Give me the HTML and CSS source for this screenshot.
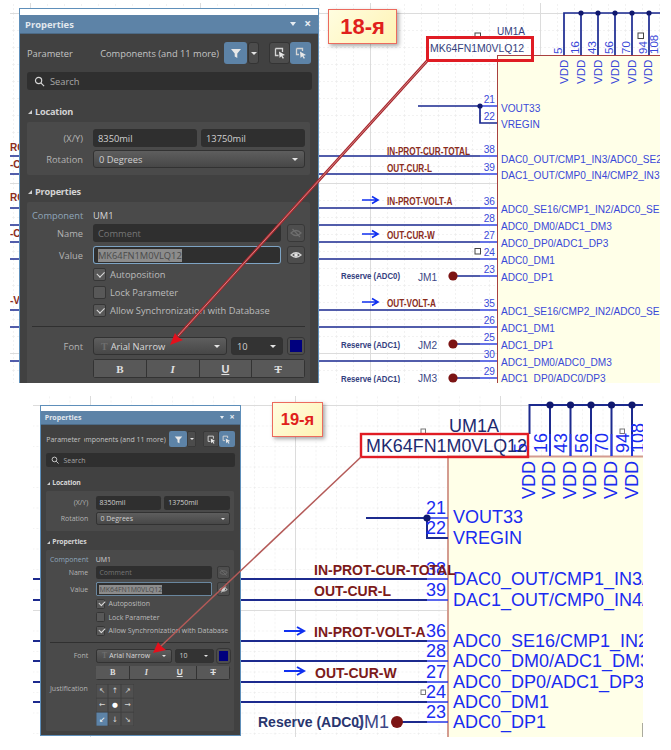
FILE: index.html
```html
<!DOCTYPE html>
<html lang="ru">
<head>
<meta charset="utf-8">
<title>Properties</title>
<link rel="stylesheet" href="styles.css">
</head>
<body>
<main class="page">

  <!-- Sheet 18 -->
  <section class="scene scene-a">
    <svg class="sheet" viewBox="10 3 650 380" width="650" height="380">
      <defs>
        <pattern id="a-minor" patternUnits="userSpaceOnUse" x="13" y="13" width="17" height="17"><path class="grid-minor" d="M0 0H17M0 0V17"/></pattern>
        <pattern id="a-major" patternUnits="userSpaceOnUse" x="30" y="13" width="170" height="170"><path class="grid-major" d="M0 0.5H170M0.5 0V170"/></pattern>
      </defs>
      <rect x="10" y="3" width="650" height="380" fill="url(#a-minor)"/>
      <rect x="10" y="3" width="650" height="380" fill="url(#a-major)"/>
      <rect class="chip" x="497.5" y="55.5" width="170" height="340"/>

      <path class="wire" d="M564 55V13H660M581 13V55M598 13V55M615 13V55M632 13V55M649 13V55"/>
      <path class="wire" d="M418 106H480V123H497M10 156H480M10 174H480M10 208H480M10 225H480M10 242H480M10 259H480M10 310H480M10 327H480M10 361H480M453 276H480M453 344H480M453 378H480"/>
      <path class="stub" d="M480 106H497M480 156H497M480 174H497M480 208H497M480 225H497M480 242H497M480 259H497M480 276H497M480 310H497M480 327H497M480 344H497M480 361H497M480 378H497"/>
      <g class="joint">
        <circle cx="581" cy="13" r="2.6"/><circle cx="598" cy="13" r="2.6"/><circle cx="615" cy="13" r="2.6"/><circle cx="632" cy="13" r="2.6"/><circle cx="649" cy="13" r="2.6"/><circle cx="480" cy="106" r="2.6"/>
      </g>
      <g class="jumper">
        <circle cx="453" cy="276" r="4.6"/><circle cx="453" cy="344" r="4.6"/><circle cx="453" cy="378" r="4.6"/>
      </g>
      <rect class="marker" x="475" y="33" width="5.5" height="5.5"/>
      <rect class="marker" x="638" y="33" width="5.5" height="5.5"/>
      <rect class="marker" x="475" y="248.5" width="5.5" height="5.5"/>

      <g class="pin-a vertical">
        <text transform="translate(562 54) rotate(-90)">5</text>
        <text transform="translate(579 54) rotate(-90)">16</text>
        <text transform="translate(596 54) rotate(-90)">43</text>
        <text transform="translate(613 54) rotate(-90)">56</text>
        <text transform="translate(630 54) rotate(-90)">70</text>
        <text transform="translate(647 54) rotate(-90)">94</text>
        <text transform="translate(658 54) rotate(-90)">108</text>
      </g>
      <g class="pin-a">
        <text transform="translate(568 84) rotate(-90)">VDD</text>
        <text transform="translate(585 84) rotate(-90)">VDD</text>
        <text transform="translate(602 84) rotate(-90)">VDD</text>
        <text transform="translate(619 84) rotate(-90)">VDD</text>
        <text transform="translate(636 84) rotate(-90)">VDD</text>
        <text transform="translate(652 84) rotate(-90)">VDD</text>
      </g>

      <text class="ref-a" x="497" y="35" textLength="28" lengthAdjust="spacingAndGlyphs">UM1A</text>
      <text class="ref-a" x="430" y="52" textLength="94" lengthAdjust="spacingAndGlyphs">MK64FN1M0VLQ12</text>
      <rect class="callout-a" x="427.5" y="37.5" width="105" height="23"/>

      <g class="pin-a number" transform="translate(495 0) scale(.88 1)">
        <text y="103">21</text><text y="120">22</text><text y="153">38</text><text y="171">39</text>
        <text y="205">36</text><text y="222">28</text><text y="239">27</text><text y="256">24</text><text y="273">23</text>
        <text y="307">35</text><text y="324">26</text><text y="341">25</text><text y="358">30</text><text y="375">29</text>
      </g>
      <g class="pin-a" transform="translate(501 0) scale(.88 1)">
        <text y="112">VOUT33</text><text y="128">VREGIN</text>
        <text y="163">DAC0_OUT/CMP1_IN3/ADC0_SE23</text>
        <text y="179">DAC1_OUT/CMP0_IN4/CMP2_IN3</text>
        <text y="213">ADC0_SE16/CMP1_IN2/ADC0_SE16</text>
        <text y="230">ADC0_DM0/ADC1_DM3</text>
        <text y="247">ADC0_DP0/ADC1_DP3</text>
        <text y="264">ADC0_DM1</text>
        <text y="281">ADC0_DP1</text>
        <text y="315">ADC1_SE16/CMP2_IN2/ADC0_SE16</text>
        <text y="332">ADC1_DM1</text>
        <text y="349">ADC1_DP1</text>
        <text y="366">ADC1_DM0/ADC0_DM3</text>
        <text y="382">ADC1_DP0/ADC0/DP3</text>
      </g>
      <g class="net-a" transform="translate(387 0) scale(.82 1)">
        <text y="155">IN-PROT-CUR-TOTAL</text>
        <text y="172">OUT-CUR-L</text>
        <text y="205">IN-PROT-VOLT-A</text>
        <text y="239">OUT-CUR-W</text>
        <text y="307">OUT-VOLT-A</text>
      </g>
      <g class="net-a">
        <text x="10" y="151">RO</text><text x="10" y="168">-CU</text><text x="10" y="201">RO</text><text x="10" y="237">-CU</text><text x="10" y="304">-VO</text>
      </g>
      <g class="reserve-a" transform="translate(341 0) scale(.84 1)">
        <text y="279">Reserve (ADC0)</text><text y="348">Reserve (ADC1)</text><text y="382">Reserve (ADC1)</text>
      </g>
      <g class="jm-a" transform="translate(418 0) scale(.88 1)">
        <text y="281">JM1</text><text y="349">JM2</text><text y="382">JM3</text>
      </g>
      <path class="flow-a" d="M362 200H377M372 196.5L378 200L372 203.5M362 234H377M372 230.5L378 234L372 237.5M362 302H377M372 298.5L378 302L372 305.5"/>
    </svg>

    <aside class="panel">
      <div class="panel-cap"></div>
      <header class="panel-title"><h1>Properties</h1><span class="title-tools"><i class="title-caret"></i><span class="title-close">×</span></span></header>
      <div class="panel-body">
        <div class="toolbar">
          <span class="toolbar-label">Parameter</span>
          <span class="toolbar-scope"><span>Components (and 11 more)</span></span>
          <span class="btn-pair">
            <button class="tool tool-on wide"><svg viewBox="0 0 12 12" width="12" height="12"><path class="icon-fill" d="M1 2H11L7.3 6.4V11L4.7 9.6V6.4Z"/></svg></button>
            <button class="tool caret-btn"><i class="caret"></i></button>
          </span>
          <span class="btn-group">
            <button class="tool"><svg viewBox="0 0 12 12" width="12" height="12"><path class="icon-line" d="M1.5 1.5H8.5V5M1.5 1.5V8.5H4.5"/><path class="icon-fill" d="M5 4.5L11 8L8.4 8.7L10 11L8.8 11.7L7.3 9.3L5.6 11Z"/></svg></button>
            <button class="tool tool-on"><svg viewBox="0 0 12 12" width="12" height="12"><path class="icon-line" d="M1.5 1.5H7.5V4M1.5 1.5V7.5H4"/><path class="icon-fill" d="M5 4.5L11 8L8.4 8.7L10 11L8.8 11.7L7.3 9.3L5.6 11Z"/></svg></button>
          </span>
        </div>
        <div class="search">
          <svg viewBox="0 0 12 12" width="11" height="11"><circle class="icon-line" cx="5" cy="5" r="3.4"/><path class="icon-line" d="M7.5 7.5L11 11"/></svg>
          <span>Search</span>
        </div>

        <h2 class="group-title">Location</h2>
        <div class="group group-location">
          <div class="row">
            <label>(X/Y)</label>
            <div class="pair"><span class="field">8350mil</span><span class="field">13750mil</span></div>
          </div>
          <div class="row">
            <label>Rotation</label>
            <span class="select"><span>0 Degrees</span><i class="caret"></i></span>
          </div>
        </div>

        <h2 class="group-title title-next">Properties</h2>
        <div class="group group-props">
          <div class="row row-plain"><label class="label-accent">Component</label><span class="value">UM1</span></div>
          <div class="row">
            <label>Name</label>
            <div class="with-btn">
              <span class="field field-muted">Comment</span>
              <button class="square"><svg viewBox="0 0 12 12" width="12" height="12"><path class="icon-dim" d="M1 6Q6 1 11 6Q6 11 1 6ZM2.5 2L10 10"/></svg></button>
            </div>
          </div>
          <div class="row">
            <label>Value</label>
            <div class="with-btn">
              <span class="field field-focus"><mark>MK64FN1M0VLQ12</mark></span>
              <button class="square"><svg viewBox="0 0 12 12" width="12" height="12"><path class="icon-line" d="M1 6Q6 1.5 11 6Q6 10.5 1 6Z"/><circle class="icon-fill" cx="6" cy="6" r="1.8"/></svg></button>
            </div>
          </div>
          <div class="checks">
            <div class="check"><span class="box box-on"></span><span>Autoposition</span></div>
            <div class="check"><span class="box"></span><span>Lock Parameter</span></div>
            <div class="check"><span class="box box-on"></span><span>Allow Synchronization with Database</span></div>
          </div>
          <hr class="rule">
          <div class="row">
            <label>Font</label>
            <div class="font-line">
              <span class="select select-font"><span class="font-name"><b class="font-t">T</b>Arial Narrow</span><i class="caret"></i></span>
              <span class="select select-size"><span>10</span><i class="caret"></i></span>
              <span class="swatch"></span>
            </div>
          </div>
          <div class="row row-style">
            <span></span>
            <div class="styles"><span class="st st-b">B</span><span class="st st-i">I</span><span class="st st-u">U</span><span class="st st-s">T</span></div>
          </div>
          <div class="row row-just">
            <label class="label-left">Justification</label>
            <div class="just">
              <span>↖</span><span>↑</span><span>↗</span><span>←</span><span class="just-dot">●</span><span>→</span><span class="just-on">↙</span><span>↓</span><span>↘</span>
            </div>
          </div>
        </div>
      </div>
    </aside>

    <svg class="leader" viewBox="10 3 650 380" width="650" height="380">
      <path class="leader-out" d="M427 61L178 336"/>
      <path class="leader-in" d="M427 61L178 336"/>
      <path class="leader-head" d="M170 345L175 333L178 337L183 340Z"/>
    </svg>
    <div class="tag tag-a">18-я</div>
  </section>

  <!-- Sheet 19 -->
  <section class="scene scene-b">
    <svg class="sheet" viewBox="33 396 610 341" width="610" height="341">
      <defs>
        <pattern id="b-minor" patternUnits="userSpaceOnUse" x="90" y="405" width="20.5" height="20.5"><path class="grid-minor" d="M0 0H20.5M0 0V20.5"/></pattern>
        <pattern id="b-major" patternUnits="userSpaceOnUse" x="90" y="405" width="205" height="205"><path class="grid-major" d="M0 0.5H205M0.5 0V205"/></pattern>
      </defs>
      <rect x="33" y="396" width="610" height="341" fill="url(#b-minor)"/>
      <rect x="33" y="396" width="610" height="341" fill="url(#b-major)"/>
      <rect class="chip chip-b" x="448" y="456.5" width="220" height="300"/>

      <path class="wire-b" d="M529.5 434V405H643M550 405V456M570.5 405V456M591 405V456M611.5 405V456M632 405V456"/>
      <path class="wire-b" d="M366 518H427V538H448M33 579H427M33 600H427M33 641H427M33 661H427M33 682H427M33 702H427M397 722H427"/>
      <path class="stub-b" d="M550 434V456M570.5 434V456M591 434V456M611.5 434V456M632 434V456M427 518H448M427 579H448M427 600H448M427 641H448M427 661H448M427 682H448M427 702H448M427 722H448"/>
      <g class="joint">
        <circle cx="550" cy="405" r="3.6"/><circle cx="570.5" cy="405" r="3.6"/><circle cx="591" cy="405" r="3.6"/><circle cx="611.5" cy="405" r="3.6"/><circle cx="632" cy="405" r="3.6"/><circle cx="427" cy="518" r="3.6"/>
      </g>
      <circle class="jumper" cx="397" cy="722" r="6"/>
      <rect class="marker-b" x="421" y="429" width="4.5" height="4.5"/>
      <rect class="marker-b" x="620" y="429" width="4.5" height="4.5"/>
      <rect class="marker-b" x="421" y="690" width="4.5" height="4.5"/>

      <g class="pin-b">
        <text transform="translate(527 453) rotate(-90)">5</text>
        <text transform="translate(547 453) rotate(-90)">16</text>
        <text transform="translate(567 453) rotate(-90)">43</text>
        <text transform="translate(588 453) rotate(-90)">56</text>
        <text transform="translate(608 453) rotate(-90)">70</text>
        <text transform="translate(629 453) rotate(-90)">94</text>
        <text transform="translate(644 453) rotate(-90)">108</text>
        <text transform="translate(535 499) rotate(-90)">VDD</text>
        <text transform="translate(555 499) rotate(-90)">VDD</text>
        <text transform="translate(576 499) rotate(-90)">VDD</text>
        <text transform="translate(596 499) rotate(-90)">VDD</text>
        <text transform="translate(617 499) rotate(-90)">VDD</text>
        <text transform="translate(638 499) rotate(-90)">VDD</text>
      </g>
      <text class="ref-b" x="449" y="432">UM1A</text>
      <text class="ref-b" x="366" y="452" textLength="161" lengthAdjust="spacingAndGlyphs">MK64FN1M0VLQ12</text>
      <rect class="callout-b" x="361" y="434" width="167" height="23"/>

      <g class="pin-b number">
        <text x="446" y="514">21</text><text x="446" y="534">22</text><text x="446" y="575">38</text><text x="446" y="596">39</text>
        <text x="446" y="637">36</text><text x="446" y="657">28</text><text x="446" y="678">27</text><text x="446" y="698">24</text><text x="446" y="718">23</text>
      </g>
      <g class="pin-b">
        <text x="453" y="523">VOUT33</text><text x="453" y="544">VREGIN</text>
        <text x="453" y="585">DAC0_OUT/CMP1_IN3/ADC0_SE23</text>
        <text x="453" y="606">DAC1_OUT/CMP0_IN4/CMP2_IN3</text>
        <text x="453" y="647">ADC0_SE16/CMP1_IN2/ADC0_SE16</text>
        <text x="453" y="667">ADC0_DM0/ADC1_DM3</text>
        <text x="453" y="688">ADC0_DP0/ADC1_DP3</text>
        <text x="453" y="708">ADC0_DM1</text>
        <text x="453" y="728">ADC0_DP1</text>
      </g>
      <g class="net-b">
        <text x="314" y="575">IN-PROT-CUR-TOTAL</text>
        <text x="314" y="596">OUT-CUR-L</text>
        <text x="314" y="637">IN-PROT-VOLT-A</text>
        <text x="315" y="678">OUT-CUR-W</text>
      </g>
      <text class="reserve-b" x="258" y="727">Reserve (ADC0)</text>
      <text class="jm-b" x="355" y="728">JM1</text>
      <path class="flow-b" d="M284 631H303M297 627L304 631L297 635M284 671H303M297 667L304 671L297 675"/>
      <path class="edge-mark" d="M643 723V737"/>
    </svg>

    <aside class="panel panel-compact">
      <div class="panel-cap"></div>
      <header class="panel-title"><h1>Properties</h1><span class="title-tools"><i class="title-caret"></i><span class="title-close">×</span></span></header>
      <div class="panel-body">
        <div class="toolbar">
          <span class="toolbar-label">Parameter</span>
          <span class="toolbar-scope"><span>Components (and 11 more)</span></span>
          <span class="btn-pair">
            <button class="tool tool-on wide"><svg viewBox="0 0 12 12" width="12" height="12"><path class="icon-fill" d="M1 2H11L7.3 6.4V11L4.7 9.6V6.4Z"/></svg></button>
            <button class="tool caret-btn"><i class="caret"></i></button>
          </span>
          <span class="btn-group">
            <button class="tool"><svg viewBox="0 0 12 12" width="12" height="12"><path class="icon-line" d="M1.5 1.5H8.5V5M1.5 1.5V8.5H4.5"/><path class="icon-fill" d="M5 4.5L11 8L8.4 8.7L10 11L8.8 11.7L7.3 9.3L5.6 11Z"/></svg></button>
            <button class="tool tool-on"><svg viewBox="0 0 12 12" width="12" height="12"><path class="icon-line" d="M1.5 1.5H7.5V4M1.5 1.5V7.5H4"/><path class="icon-fill" d="M5 4.5L11 8L8.4 8.7L10 11L8.8 11.7L7.3 9.3L5.6 11Z"/></svg></button>
          </span>
        </div>
        <div class="search">
          <svg viewBox="0 0 12 12" width="11" height="11"><circle class="icon-line" cx="5" cy="5" r="3.4"/><path class="icon-line" d="M7.5 7.5L11 11"/></svg>
          <span>Search</span>
        </div>

        <h2 class="group-title">Location</h2>
        <div class="group group-location">
          <div class="row">
            <label>(X/Y)</label>
            <div class="pair"><span class="field">8350mil</span><span class="field">13750mil</span></div>
          </div>
          <div class="row">
            <label>Rotation</label>
            <span class="select"><span>0 Degrees</span><i class="caret"></i></span>
          </div>
        </div>

        <h2 class="group-title title-next">Properties</h2>
        <div class="group group-props">
          <div class="row row-plain"><label class="label-accent">Component</label><span class="value">UM1</span></div>
          <div class="row">
            <label>Name</label>
            <div class="with-btn">
              <span class="field field-muted">Comment</span>
              <button class="square"><svg viewBox="0 0 12 12" width="12" height="12"><path class="icon-dim" d="M1 6Q6 1 11 6Q6 11 1 6ZM2.5 2L10 10"/></svg></button>
            </div>
          </div>
          <div class="row">
            <label>Value</label>
            <div class="with-btn">
              <span class="field field-focus"><mark>MK64FN1M0VLQ12</mark></span>
              <button class="square"><svg viewBox="0 0 12 12" width="12" height="12"><path class="icon-line" d="M1 6Q6 1.5 11 6Q6 10.5 1 6Z"/><circle class="icon-fill" cx="6" cy="6" r="1.8"/><path class="icon-line" d="M3 10L9 2"/></svg></button>
            </div>
          </div>
          <div class="checks">
            <div class="check"><span class="box box-on"></span><span>Autoposition</span></div>
            <div class="check"><span class="box"></span><span>Lock Parameter</span></div>
            <div class="check"><span class="box box-on"></span><span>Allow Synchronization with Database</span></div>
          </div>
          <hr class="rule">
          <div class="row">
            <label>Font</label>
            <div class="font-line">
              <span class="select select-font"><span class="font-name"><b class="font-t">T</b>Arial Narrow</span><i class="caret"></i></span>
              <span class="select select-size"><span>10</span><i class="caret"></i></span>
              <span class="swatch"></span>
            </div>
          </div>
          <div class="row row-style">
            <span></span>
            <div class="styles"><span class="st st-b">B</span><span class="st st-i">I</span><span class="st st-u">U</span><span class="st st-s">T</span></div>
          </div>
          <div class="row row-just">
            <label class="label-left">Justification</label>
            <div class="just">
              <span>↖</span><span>↑</span><span>↗</span><span>←</span><span class="just-dot">●</span><span>→</span><span class="just-on">↙</span><span>↓</span><span>↘</span>
            </div>
          </div>
        </div>
      </div>
    </aside>

    <svg class="leader" viewBox="33 396 610 341" width="610" height="341">
      <path class="leader-thin" d="M361 457L160 647"/>
      <path class="leader-head" d="M153 653L158 642L161 646L166 650Z"/>
    </svg>
    <div class="tag tag-b">19-я</div>
  </section>
</main>
</body>
</html>
```

FILE: styles.css
```css
* { box-sizing: border-box; }

html, body { margin: 0; background: #fff; }

.page {
  width: 671px;
  height: 750px;
  padding-top: 3px;
  display: flex;
  flex-direction: column;
  overflow: hidden;
}

/* Schematic canvases */
.scene { position: relative; overflow: hidden; flex: none; }
.scene-a { width: 650px; height: 380px; margin-left: 10px; }
.scene-b { width: 610px; height: 341px; margin-left: 33px; margin-top: 13px; }

.sheet, .leader { position: absolute; left: 0; top: 0; display: block; }
.leader { pointer-events: none; }

.grid-minor { fill: none; stroke: #e6e6e6; stroke-width: 1; stroke-dasharray: 2 2; }
.grid-major { fill: none; stroke: #dcdcdc; stroke-width: 1; }

.chip { fill: #ffffe8; stroke: #a84040; stroke-width: 1; }
.chip-b { stroke: #d49c90; stroke-width: 2; }

.wire { fill: none; stroke: #1a2890; stroke-width: 1.7; }
.stub { fill: none; stroke: #3344dd; stroke-width: 1.3; }
.wire-b { fill: none; stroke: #1c2a8e; stroke-width: 2; }
.stub-b { fill: none; stroke: #2536e8; stroke-width: 1.6; }
.joint { fill: #10186e; }
.jumper { fill: #7c1414; }
.marker { fill: #fff; stroke: #444; stroke-width: 1; }
.marker-b { fill: #fff; stroke: #777; stroke-width: 1; }
.edge-mark { stroke: #555; stroke-width: 1; }

.pin-a text { font: 11.5px "Liberation Sans", Arial, sans-serif; fill: #3a48d8; }
.pin-b text { font: 18px "Liberation Sans", Arial, sans-serif; fill: #1a2cf0; }
.number text { text-anchor: end; }

.ref-a { font: 11px "Liberation Sans", Arial, sans-serif; fill: #33407e; }
.ref-b { font: 18px "Liberation Sans", Arial, sans-serif; fill: #1d2a70; }

.net-a text { font: bold 10px "Liberation Sans", Arial, sans-serif; fill: #8a2c1c; }
.net-b text { font: bold 14px "Liberation Sans", Arial, sans-serif; fill: #7c1a1a; }

.reserve-a text { font: bold 9.3px "Liberation Sans", Arial, sans-serif; fill: #33407e; }
.reserve-b { font: bold 14px "Liberation Sans", Arial, sans-serif; fill: #28356e; }
.jm-a text { font: 11.5px "Liberation Sans", Arial, sans-serif; fill: #3c4686; }
.jm-b { font: 18px "Liberation Sans", Arial, sans-serif; fill: #3c4686; }

.callout-a { fill: none; stroke: #e01c24; stroke-width: 3; }
.callout-b { fill: none; stroke: #e01c24; stroke-width: 2.4; }

.flow-a { fill: none; stroke: #1030f0; stroke-width: 1.6; }
.flow-b { fill: none; stroke: #1030f0; stroke-width: 2; }

.leader-out { fill: none; stroke: #a8262c; stroke-width: 2.8; }
.leader-in { fill: none; stroke: #e0a0a0; stroke-width: .8; }
.leader-thin { fill: none; stroke: #b45a58; stroke-width: 1.5; }
.leader-head { fill: #e4101c; }

/* Sheet number stickers */
.tag {
  position: absolute;
  top: 6px;
  display: flex;
  align-items: center;
  justify-content: center;
  font-family: "Liberation Sans", Arial, sans-serif;
  font-weight: bold;
  color: #e0201c;
  background: linear-gradient(135deg, #fffde0, #fff3b4);
  border: 1.5px solid #ec6a5e;
  box-shadow: 2px 2px 4px rgba(0, 0, 0, .35);
}
.tag-a { left: 318px; width: 69px; height: 35px; font-size: 22px; }
.tag-b { left: 239px; width: 51px; height: 35px; font-size: 16.5px; }

/* Properties panel */
.panel {
  position: absolute;
  left: 9px;
  top: 5px;
  width: 300px;
  height: 400px;
  display: flex;
  flex-direction: column;
  background: #414141;
  border: 1px solid #5e8fba;
  font: 9.3px "Open Sans", "Noto Sans", sans-serif;
  color: #c4c4c4;
}
.panel-compact {
  zoom: .75;
  left: 9.33px;
  top: 12px;
  width: 268px;
  height: 441px;
}

.panel-cap { flex: none; height: 6px; background: #fff; }
.panel-title {
  flex: none;
  height: 19px;
  padding: 0 7px 0 5px;
  display: flex;
  align-items: center;
  justify-content: space-between;
  background: #5d83a7;
  border-bottom: 1px solid #4c6a86;
}
.panel-title h1 { margin: 0; font-size: 9.4px; font-weight: 700; color: #e2e8ee; }
.title-tools { display: flex; align-items: center; gap: 8px; }
.title-caret {
  width: 0; height: 0;
  border-left: 3px solid transparent;
  border-right: 3px solid transparent;
  border-top: 4px solid #e6ecf2;
}
.title-close { font-size: 12px; line-height: 10px; font-weight: 700; color: #e6ecf2; }

.panel-body { flex: 1; min-height: 0; padding: 8px 6px 0 7px; overflow: hidden; }

.toolbar { height: 22px; margin-right: 1px; display: flex; align-items: center; }
.toolbar-label { flex: none; width: 50px; }
.toolbar-scope {
  flex: 1;
  min-width: 0;
  display: flex;
  justify-content: flex-end;
  overflow: hidden;
  white-space: nowrap;
  margin-right: 5px;
}
.toolbar-scope span { flex: none; }

.btn-pair, .btn-group { flex: none; display: flex; height: 22px; gap: 1px; }
.btn-group { margin-left: 10px; gap: 0; }
.tool {
  width: 21px;
  height: 22px;
  padding: 0;
  display: flex;
  align-items: center;
  justify-content: center;
  border: 0;
  border-radius: 3px;
  background: #4c4c4c;
  box-shadow: inset 0 0 0 1px #343434;
}
.tool.wide { width: 23px; }
.tool-on { background: #5d83a7; box-shadow: none; }
.caret-btn { width: 11px; }

.icon-fill { fill: #e8e8e8; }
.icon-line { fill: none; stroke: #d4d4d4; stroke-width: 1.3; }
.icon-dim { fill: none; stroke: #6e6e6e; stroke-width: 1.2; }

.caret {
  flex: none;
  width: 0; height: 0;
  border-left: 3.5px solid transparent;
  border-right: 3.5px solid transparent;
  border-top: 3.5px solid #e4e4e4;
}

.search {
  height: 18px;
  margin-top: 8px;
  padding-left: 7px;
  display: flex;
  align-items: center;
  gap: 5px;
  border-radius: 3px;
  background: #2f2f2f;
  color: #a8a8a8;
}

.group-title {
  position: relative;
  height: 14px;
  margin: 15px 0 3px;
  padding-left: 8px;
  font-size: 9.2px;
  line-height: 14px;
  font-weight: 700;
  letter-spacing: -.2px;
  color: #d4d4d4;
}
.group-title::before {
  content: "";
  position: absolute;
  left: 1px;
  top: 5px;
  border-left: 4px solid transparent;
  border-bottom: 4px solid #d0d0d0;
}
.title-next { margin-top: 10px; }

.group { margin-right: 2px; padding: 0 5px; background: #4a4a4a; border-radius: 2px; }
.group-location { padding-top: 7px; padding-bottom: 7px; display: flex; flex-direction: column; gap: 3px; }
.group-props { padding-top: 6px; padding-bottom: 6px; }

.row { display: grid; grid-template-columns: 51px 1fr; column-gap: 10px; align-items: center; }
.row label { text-align: right; color: #b4b4b4; white-space: nowrap; }
.row .label-accent { color: #8fa6ba; }
.row .label-left { text-align: left; }
.row-plain { height: 14px; margin-bottom: 2px; }
.row-plain + .row + .row { margin-top: 4px; }
.value { color: #d4d4d4; }

.pair { display: grid; grid-template-columns: 1fr 1fr; gap: 4px; }
.field {
  height: 18px;
  padding: 0 5px;
  display: flex;
  align-items: center;
  min-width: 0;
  border-radius: 3px;
  background: #2f2f2f;
  color: #d0d0d0;
}
.field-muted { color: #767676; }
.field-focus { box-shadow: inset 0 0 0 1px #7ea4c4; }
.field-focus mark { background: #8c8c8c; color: #4a4a4a; }

.select {
  height: 18px;
  padding: 0 6px 0 5px;
  display: flex;
  align-items: center;
  justify-content: space-between;
  min-width: 0;
  border-radius: 3px;
  border: 1px solid #323232;
  background: linear-gradient(#5e5e5e, #474747);
  color: #cfcfcf;
}

.with-btn { display: flex; gap: 6px; align-items: center; }
.with-btn .field { flex: 1; }
.square {
  flex: none;
  width: 18px;
  height: 18px;
  padding: 0;
  display: flex;
  align-items: center;
  justify-content: center;
  border: 1px solid #383838;
  border-radius: 3px;
  background: #4e4e4e;
}

.checks { margin: 4px 0 0 61px; display: flex; flex-direction: column; gap: 5px; }
.check { height: 13px; display: flex; align-items: center; gap: 4px; white-space: nowrap; color: #bcbcbc; }
.box {
  position: relative;
  flex: none;
  width: 13px;
  height: 13px;
  border: 1px solid #363636;
  border-radius: 2px;
  background: #585858;
}
.box-on::after {
  content: "";
  position: absolute;
  left: 3px;
  top: 2px;
  width: 6px;
  height: 3.5px;
  border-left: 1.3px solid #dcdcdc;
  border-bottom: 1.3px solid #dcdcdc;
  transform: rotate(-45deg);
}

.rule { height: 1px; margin: 9px 0 10px; border: 0; background: #303030; }

.font-line { display: flex; gap: 4px; align-items: center; }
.select-font { flex: 1; }
.select-size { flex: none; width: 52px; background: #333; }
.font-name { display: flex; align-items: center; gap: 3px; color: #dadada; }
.font-t { font: bold 10px "Liberation Serif", serif; color: #6e6e6e; margin-left: 2px; }
.swatch {
  flex: none;
  width: 18px;
  height: 18px;
  border: 3px solid #4e4e4e;
  outline: 1px solid #363636;
  outline-offset: -1px;
  border-radius: 3px;
  background: #00007e;
}

.row-style { margin-top: 4px; }
.styles {
  height: 19px;
  display: grid;
  grid-template-columns: repeat(4, 1fr);
  gap: 1px;
  border-radius: 3px;
  background: #333;
  padding: 1px;
}
.st {
  display: flex;
  align-items: center;
  justify-content: center;
  background: #585858;
  color: #e0e0e0;
  font: bold 11px "Liberation Serif", serif;
}
.st-i { font-style: italic; }
.st-u { text-decoration: underline; font-family: "Liberation Sans", sans-serif; }
.st-s { text-decoration: line-through; }

.row-just { margin-top: 5px; align-items: start; }
.just {
  width: 51px;
  display: grid;
  grid-template-columns: repeat(3, 17px);
  grid-auto-rows: 19px;
  gap: 0;
}
.just span {
  display: flex;
  align-items: center;
  justify-content: center;
  background: #505050;
  box-shadow: inset 0 0 0 .5px #3a3a3a;
  font: 10px "DejaVu Sans", sans-serif;
  color: #d8d8d8;
}
.just .just-dot { color: #fff; font-size: 9px; }
.just .just-on { background: #5d83a7; color: #fff; }

.panel-compact .title-next { margin-top: 9px; }
.panel-compact .group-props { padding-top: 5px; }
.panel-compact .rule { margin-bottom: 8px; }
```
